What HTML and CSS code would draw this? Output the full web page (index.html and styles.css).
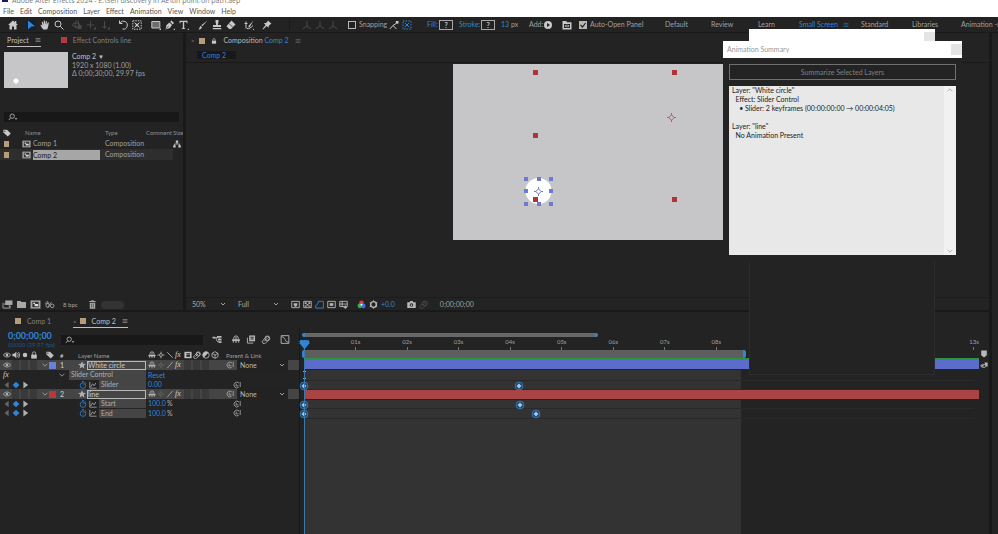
FILE: index.html
```html
<!DOCTYPE html>
<html lang="en">
<head>
    <meta charset="UTF-8">
    <title>Adobe After Effects 2024</title>
    <link rel="stylesheet" href="styles.css">
</head>
<body>
    <svg class="sprite" aria-hidden="true">
        <symbol id="i-home" viewBox="0 0 10 10"><path d="M5 .5 0 5h1.5v4.500h2.500V6.500h2v3h2.500V5H10L8.300 3.500V1H7v1.300z"/></symbol>
        <symbol id="i-arrow" viewBox="0 0 10 10"><path d="M2 .5 9 6.200 5.400 6.500 2 9.500z"/></symbol>
        <symbol id="i-hand" viewBox="0 0 10 10"><path d="M3.200 9.500C2 8 1 6.500.4 5c.6-.6 1.200-.2 2 .9L1.700 2c.6-.5 1-.2 1.200.2l.9 2.500L3.700.8c.5-.5 1.100-.4 1.200.2l.3 3.500.7-3.400c.5-.4 1-.1 1 .4l-.3 3.300L8 2.300c.6-.2.9.1.8.7C8.400 5 8.300 7.500 7 9.500z"/></symbol>
        <symbol id="i-zoom" viewBox="0 0 10 10"><circle cx="4" cy="4" r="3" class="ln"/><path class="ln" d="M6.200 6.200 9.500 9.500"/></symbol>
        <symbol id="i-orbit" viewBox="0 0 10 10"><ellipse class="ln" cx="4" cy="5" rx="3.500" ry="2"/><ellipse class="ln" cx="5" cy="4.500" rx="1.800" ry="3.800"/><path d="M6 5h3.500v4H6z"/></symbol>
        <symbol id="i-pan" viewBox="0 0 10 10"><path class="ln" d="M4.500 1v7.500M.8 5h7.500"/><path d="M7 9.500h3v-3z"/></symbol>
        <symbol id="i-dolly" viewBox="0 0 10 10"><path class="ln" d="M4.500 1v7M2.500 6l2 2.500 2-2.500"/><path d="M7 9.500h3v-3z"/></symbol>
        <symbol id="i-rot" viewBox="0 0 10 10"><path class="ln" d="M2 3A4 4 0 1 1 4.500 9M1.500.5v3h3"/></symbol>
        <symbol id="i-anchor" viewBox="0 0 10 10"><path class="ln" stroke-dasharray="1.500 1" d="M.8.800h8.400v8.400H.8z"/><path class="ln" d="m2.500 2.500 5 5m0-5-5 5"/><circle cx="5" cy="5" r="1.500"/></symbol>
        <symbol id="i-rect" viewBox="0 0 10 10"><path class="ln" d="M.8 1.500h8v6.500h-8z"/><path fill-opacity=".45" d="M1 2h7.500v6H1z"/><path d="M8 10h2V8z"/></symbol>
        <symbol id="i-pen" viewBox="0 0 10 10"><path d="M.5 9.500 1.500 5l3-2.500L7 5 5 8zM5.200 1.800 6.500.5l2.500 2.500-1.300 1.400zM8.300 10H10V8.300z"/><path stroke="#232323" stroke-width=".6" d="m.8 9.200 2.700-3"/></symbol>
        <symbol id="i-type" viewBox="0 0 10 10"><path d="M.5.800h8v2.400h-.8L7.300 2H5.200v6l1.100.4V9H2.700v-.6L3.800 8V2H1.700l-.4 1.200H.5zM8.300 10H10V8.300z"/></symbol>
        <symbol id="i-brush" viewBox="0 0 10 10"><path d="M9.500.5 4.300 6.200 3.300 5.200zM.5 9.500c1.200-.8.700-2.800 2.200-3.600L4 7.200C3.500 9 2 9.500.5 9.500z"/></symbol>
        <symbol id="i-stamp" viewBox="0 0 10 10"><path d="M3.500 1.800a1.600 1.600 0 1 1 3 0L5.800 5H9v2H1V5h3.200zM.8 8h8.400v1.300H.8z"/></symbol>
        <symbol id="i-eraser" viewBox="0 0 10 10"><path d="m5.500.500 4 4L5 9H3.200L.5 6.300z"/><path stroke="#232323" stroke-width=".7" d="m3 3.500 3.800 3.800"/></symbol>
        <symbol id="i-roto" viewBox="0 0 10 10"><path class="ln" d="M2 1.500v7M.5 3.500h3M3 8.500c2 .8 4-1 6-3"/><path d="M9.500.5 5.800 7l-1.400.6.100-1.600zM8.500 10H10V8.500z"/></symbol>
        <symbol id="i-pin" viewBox="0 0 10 10"><path d="m6 .5 3.500 3.300-1 .4-1.700 1.600-.2 2L4.700 6 1 9.500l-.5-.4L3.600 5 1.800 3.300l2.200-.2 1.500-1.700z"/></symbol>
        <symbol id="i-axis" viewBox="0 0 10 10"><path class="ln" d="M5 1v5L1 9m4-3 4 3"/></symbol>
        <symbol id="i-snap" viewBox="0 0 10 10"><path class="ln" d="M.8 9 4 5.500 7.500 9M4 5.500l3-2"/><path d="M6.800 1h2.700v2.700H6.800z"/></symbol>
        <symbol id="i-snap2" viewBox="0 0 10 10"><path class="ln" stroke-dasharray="1.500 1.200" d="M1 1h8v8H1z"/><path class="ln" d="m3 3 4 4m0-4L3 7"/></symbol>
        <symbol id="i-add" viewBox="0 0 10 10"><circle cx="5" cy="5" r="4"/><path fill="#232323" d="m4 3 3 2-3 2z"/></symbol>
        <symbol id="i-panel" viewBox="0 0 10 10"><path d="M.5 1h3.800l.6 1.200h4.600V9.500h-9z"/><path fill="#232323" d="M2 4h6v4H2z"/><path d="m4.500 4.600-2 1.400 2 1.400zm1 0 2 1.400-2 1.400z"/></symbol>
        <symbol id="i-menu" viewBox="0 0 10 10"><path d="M1 1.500h8v1H1zm0 3h8v1H1zm0 3h8v1H1z"/></symbol>
        <symbol id="i-search" viewBox="0 0 12 10"><circle class="ln" cx="5" cy="4" r="2.700"/><path class="ln" d="M3 6 .8 8.800"/><path d="M8 6.500h3.500L9.800 8.500z"/></symbol>
        <symbol id="i-tag" viewBox="0 0 10 10"><path d="M.5 1h4.500L9.700 5.700 6 9.500.5 4.500z"/><circle cx="2.300" cy="2.700" r=".8" fill="#232323"/></symbol>
        <symbol id="i-flow" viewBox="0 0 10 10"><path d="M3.500.5h3v3h-3zM.3 6.500h3v3h-3zM6.700 6.500h3v3h-3z"/><path class="ln" d="M5 3v2M1.800 7V5h6.400v2"/></symbol>
        <symbol id="i-comp" viewBox="0 0 12 10"><path d="M.5.5h11v9H.5z"/><path fill="#333" d="M2.500 2h7v6h-7z"/><path d="M3.500 3h2v1.500h-2zM5 4.500h4V7H5z" fill="#ddd"/></symbol>
        <symbol id="i-interp" viewBox="0 0 12 10"><path d="M3.500.5h8v5h-8z"/><path class="ln" d="M1 3v6h8V6.500M2 4.500h6V8"/></symbol>
        <symbol id="i-folder" viewBox="0 0 12 10"><path d="M1 1h4l1 1.300h5V9H1z"/></symbol>
        <symbol id="i-adj" viewBox="0 0 12 10"><path class="ln" d="M1 3.500h4L3 1M4 8.500l4-6"/><circle class="ln" cx="4" cy="6" r="2"/><circle class="ln" cx="9" cy="6.500" r="2"/></symbol>
        <symbol id="i-trash" viewBox="0 0 10 10"><path d="M1.500 1.200h2L4 .4h2l.5.8h2v1h-7zM2 3h6v6.700H2z"/><path stroke="#232323" stroke-width=".6" d="M4 4v4.500M6 4v4.500"/></symbol>
        <symbol id="i-lock" viewBox="0 0 10 10"><path d="M1.500 4.500h7v5h-7z"/><path class="ln" d="M3 5V3a2 2 0 0 1 4 0v2"/></symbol>
        <symbol id="i-view1" viewBox="0 0 10 10"><path class="ln" d="M.8 1.500h8.400v7H.8z"/><path d="M3 3.500h4v3H6v1H4v-1H3z"/></symbol>
        <symbol id="i-grid" viewBox="0 0 10 10"><path class="ln" d="M.8 1.500h8.400v7H.8z"/><path d="M2 2.500h2v2H2zm4 0h2v2H6zM4 4.500h2v1.500H4zM2 6h2v1.500H2zm4 0h2v1.500H6z"/></symbol>
        <symbol id="i-mask" viewBox="0 0 10 10"><path class="ln" d="M.8 9V6c1.700 0 2.700-2 3-4.500h5.500V9z"/></symbol>
        <symbol id="i-roi" viewBox="0 0 10 10"><path class="ln" d="M.8 1.500h8.400v7H.8z"/><path d="M3 3.500h4v3H3z"/></symbol>
        <symbol id="i-guides" viewBox="0 0 10 10"><path class="ln" d="M.8 1.500h8.400v5.800H.8zM3.500 1.500v6M.8 4.500h8.400M7 6v4M5 8.200h4"/></symbol>
        <symbol id="i-rgb" viewBox="0 0 10 10"><circle cx="5" cy="3.200" r="2.600" fill="#e03c3c"/><circle cx="3.200" cy="6.500" r="2.600" fill="#35b24c"/><circle cx="6.900" cy="6.600" r="2.600" fill="#3f6fe8"/><circle cx="5" cy="5.300" r="1.100" fill="#fff"/></symbol>
        <symbol id="i-shutter" viewBox="0 0 10 10"><circle cx="5" cy="5" r="3.200" fill="none" stroke="currentColor" stroke-width="1.600"/><path class="ln" d="M5 .3v2M5 7.700v2M.8 2.600l1.800 1M7.500 6.500l1.700 1M.8 7.500l1.700-1M7.500 3.500l1.700-1"/></symbol>
        <symbol id="i-camera" viewBox="0 0 10 10"><path d="M.3 2.500H3L3.700 1h2.600L7 2.500h2.700V9H.3z"/><circle cx="5" cy="5.600" r="2" fill="#232323"/><circle cx="5" cy="5.600" r="1"/></symbol>
        <symbol id="i-clip" viewBox="0 0 10 10"><path class="ln" d="M1.500 6 5 2.500a2 2 0 0 1 3 3L4.500 9a2 2 0 0 1-3-3zM3 7l3.500-3.500"/><circle class="ln" cx="6.500" cy="3.700" r="2.600"/></symbol>
        <symbol id="i-mini" viewBox="0 0 10 10"><path d="M0 2h3v2H0zM5 1h5v2H5zM6 4h4v2H6zM7 7h3v2H7z"/><path class="ln" d="M2 3h4M4 3c0 3 1 5 4 5"/></symbol>
        <symbol id="i-shy" viewBox="0 0 10 10"><path class="ln" d="M2.500 5V3.500a2.500 2.500 0 0 1 5 0V5M.5 5.500h9M5 2v7M2 5.500v3M8 5.500v3"/><path d="M1 5h8v1.800H1z"/></symbol>
        <symbol id="i-blend" viewBox="0 0 10 10"><path d="M3 .5h6.500V7H3z"/><path class="ln" d="M1 3v6h6.500"/><path fill="#232323" d="M4.500 2h3.500v1H4.500zM4.500 4h3.500v1H4.500z"/></symbol>
        <symbol id="i-graph" viewBox="0 0 10 10"><path class="ln" d="M.7.700h8.600v8.600H.7zM1.500 2C6 2 4 8 9 8"/></symbol>
        <symbol id="i-curve" viewBox="0 0 10 10"><path class="ln" d="M1 1v8h8.500M2 7.500 4.500 3.500 6.500 6 8.500 2.500"/></symbol>
        <symbol id="i-eye" viewBox="0 0 10 10"><path class="ln" d="M.5 5C2.500 1.700 7.500 1.700 9.500 5 7.500 8.300 2.500 8.300.5 5z"/><circle cx="5" cy="5" r="1.600"/></symbol>
        <symbol id="i-sound" viewBox="0 0 10 10"><path d="M.5 3.500h2L5.500.8v8.400L2.500 6.500h-2z"/><path class="ln" d="M6.700 2.500c1.400 1.500 1.400 3.500 0 5M8 1.200c2 2.200 2 5.400 0 7.600"/></symbol>
        <symbol id="i-dot" viewBox="0 0 10 10"><circle cx="5" cy="5" r="2.800"/></symbol>
        <symbol id="i-sun" viewBox="0 0 10 10"><circle class="ln" cx="5" cy="5" r="1.800"/><path class="ln" d="M5 .8v1.700M5 7.500v1.700M.8 5h1.700M7.500 5h1.700"/></symbol>
        <symbol id="i-back" viewBox="0 0 10 10"><path class="ln" d="m1.500 1.500 7 7"/></symbol>
        <symbol id="i-slash" viewBox="0 0 10 10"><path class="ln" d="m1.500 9 7-8"/></symbol>
        <symbol id="i-frame" viewBox="0 0 10 10"><path d="M.5 1h9v8h-9z"/><path fill="#232323" d="M3 2.500h4.500v1H3zM3 4.500h4.500v2.700H3z"/></symbol>
        <symbol id="i-half" viewBox="0 0 10 10"><circle class="ln" cx="5" cy="5" r="4"/><path d="M8 2.200A4 4 0 1 0 2.200 8z"/></symbol>
        <symbol id="i-cube" viewBox="0 0 10 10"><path class="ln" d="M5 .8 8.800 3v4L5 9.200 1.200 7V3zM1.200 3 5 5l3.800-2M5 5v4"/></symbol>
        <symbol id="i-star" viewBox="0 0 10 10"><path d="m5 .3 1.400 3.100 3.400.3-2.600 2.300.8 3.400-3-1.800-3 1.800.8-3.400L.2 3.700l3.400-.3z"/></symbol>
        <symbol id="i-watch" viewBox="0 0 10 10"><circle class="ln" cx="5" cy="5.700" r="3.500"/><path class="ln" d="M5 5.700 6.800 3.800M3.800.700h2.400M8 1.800l1 1"/></symbol>
        <symbol id="i-whip" viewBox="0 0 10 10"><path class="ln" d="M6.300 5.200a1.300 1.300 0 1 1-1.300-1.300M7.200 7.800a3.600 3.600 0 1 1 .2-5.300M9 1.200v6.300"/></symbol>
        <symbol id="i-chev" viewBox="0 0 10 10"><path class="ln" d="m2 3.500 3 3 3-3"/></symbol>
        <symbol id="i-left" viewBox="0 0 10 10"><path d="M7 1v8L2 5z"/></symbol>
        <symbol id="i-right" viewBox="0 0 10 10"><path d="M3 .5v9L9 5z"/></symbol>
        <symbol id="i-key" viewBox="0 0 10 10"><path d="m5 .8 4.200 4.200L5 9.200.8 5z"/></symbol>
        <symbol id="i-marker" viewBox="0 0 10 10"><path d="M1.500.5h7v6L5 9.500 1.500 6.500z"/></symbol>
        <symbol id="i-compbtn" viewBox="0 0 10 10"><path class="ln" d="M1 6h4M3 3.500 1 6l2 2.500"/><circle class="ln" cx="5" cy="6.200" r="2"/><path d="M5.500 2H9.500v5h-2z"/></symbol>
        <symbol id="i-kf" viewBox="0 0 12 12"><circle cx="6" cy="6" r="4.700" fill="#1d4468" stroke="#3a7fbe"/><path fill="#a4c8e8" d="m6 3 3 3-3 3-3-3z"/></symbol>
        <symbol id="i-target" viewBox="0 0 10 10"><path class="ln" d="M5 2 8 5 5 8 2 5zM5 0v2M5 8v2M0 5h2M8 5h2"/></symbol>
    </svg>

    <header class="titlebar"><span class="app-icon"></span>Adobe After Effects 2024 - E:\Sen discovery in AE\tin point on path.aep</header>
    <nav class="menubar">
        <a href="#">File</a><a href="#">Edit</a><a href="#">Composition</a><a href="#">Layer</a><a href="#">Effect</a><a href="#">Animation</a><a href="#">View</a><a href="#">Window</a><a href="#">Help</a>
    </nav>

    <div class="toolbar">
        <div class="tools">
            <div class="group"><button aria-label="Home"><svg><use href="#i-home"/></svg></button></div>
            <div class="group">
                <button class="active" aria-label="Selection"><svg><use href="#i-arrow"/></svg></button>
                <button aria-label="Hand"><svg><use href="#i-hand"/></svg></button>
                <button aria-label="Zoom"><svg><use href="#i-zoom"/></svg></button>
            </div>
            <div class="group dim">
                <button aria-label="Orbit"><svg><use href="#i-orbit"/></svg></button>
                <button aria-label="Pan"><svg><use href="#i-pan"/></svg></button>
                <button aria-label="Dolly"><svg><use href="#i-dolly"/></svg></button>
            </div>
            <div class="group">
                <button aria-label="Rotate"><svg><use href="#i-rot"/></svg></button>
                <button aria-label="Anchor point"><svg><use href="#i-anchor"/></svg></button>
            </div>
            <div class="group shapes">
                <button aria-label="Rectangle"><svg><use href="#i-rect"/></svg></button>
                <button aria-label="Pen"><svg><use href="#i-pen"/></svg></button>
                <button aria-label="Type"><svg><use href="#i-type"/></svg></button>
            </div>
            <div class="group">
                <button aria-label="Brush"><svg><use href="#i-brush"/></svg></button>
                <button aria-label="Clone stamp"><svg><use href="#i-stamp"/></svg></button>
                <button aria-label="Eraser"><svg><use href="#i-eraser"/></svg></button>
            </div>
            <div class="group"><button aria-label="Roto brush"><svg><use href="#i-roto"/></svg></button></div>
            <div class="group"><button aria-label="Puppet pin"><svg><use href="#i-pin"/></svg></button></div>
            <div class="group dim axes">
                <button aria-label="Local axis"><svg><use href="#i-axis"/></svg></button>
                <button aria-label="World axis"><svg><use href="#i-axis"/></svg></button>
                <button aria-label="View axis"><svg><use href="#i-axis"/></svg></button>
            </div>
        </div>
        <div class="options">
            <label><input type="checkbox">Snapping</label>
            <button aria-label="Snap edges"><svg><use href="#i-snap"/></svg></button>
            <button class="active" aria-label="Snap features"><svg><use href="#i-snap2"/></svg></button>
            <span class="blue">Fill:</span><button class="swatch">?</button>
            <span class="blue">Stroke:</span><button class="swatch">?</button>
            <span><b>13</b> px</span>
            <span>Add:</span><button aria-label="Add"><svg><use href="#i-add"/></svg></button>
            <button aria-label="Panels"><svg><use href="#i-panel"/></svg></button>
            <label><input type="checkbox" checked>Auto-Open Panel</label>
        </div>
        <nav class="workspaces">
            <a href="#">Default</a><a href="#">Review</a><a href="#">Learn</a><a class="current" href="#">Small Screen <svg><use href="#i-menu"/></svg></a><a href="#">Standard</a><a href="#">Libraries</a><a href="#">Animation -n</a>
        </nav>
    </div>

    <div class="frame">
        <main class="panels">
            <div class="upper">
                <section class="project">
                    <div class="tabs">
                        <span class="tab current">Project <svg><use href="#i-menu"/></svg></span>
                        <span class="tab"><i class="chip red"></i>Effect Controls line</span>
                    </div>
                    <div class="preview">
                        <div class="thumb"></div>
                        <div><strong>Comp 2 <span class="tri">▼</span></strong><br>1920 x 1080 (1.00)<br>Δ 0;00;30;00, 29.97 fps</div>
                    </div>
                    <label class="search"><svg><use href="#i-search"/></svg><input type="text" aria-label="Search project"></label>
                    <table class="items">
                        <thead><tr><th class="c-tag"><svg><use href="#i-tag"/></svg></th><th class="c-name">Name</th><th class="c-type">Type</th><th class="c-comment">Comment</th><th>Size</th></tr></thead>
                        <tbody>
                            <tr><td><i class="chip tan"></i></td><td><div class="item"><svg><use href="#i-comp"/></svg><span>Comp 1</span></div></td><td>Composition</td><td></td><td class="light"><svg><use href="#i-flow"/></svg></td></tr>
                            <tr class="selected"><td><i class="chip tan"></i></td><td><div class="item"><svg><use href="#i-comp"/></svg><span>Comp 2</span></div></td><td>Composition</td><td></td><td class="off"></td></tr>
                        </tbody>
                    </table>
                    <div class="project-foot">
                        <button aria-label="Interpret footage"><svg><use href="#i-interp"/></svg></button>
                        <button aria-label="New folder"><svg><use href="#i-folder"/></svg></button>
                        <button aria-label="New composition"><svg><use href="#i-comp"/></svg></button>
                        <button aria-label="Project settings"><svg><use href="#i-adj"/></svg></button>
                        <span class="bpc">8 bpc</span>
                        <button aria-label="Delete"><svg><use href="#i-trash"/></svg></button>
                        <i class="pill"></i>
                    </div>
                </section>

                <section class="viewer">
                    <div class="tabs">
                        <span class="x">×</span><i class="chip tan"></i><svg class="light"><use href="#i-lock"/></svg>
                        <span class="viewer-title">Composition <span class="blue">Comp 2</span></span><svg><use href="#i-menu"/></svg>
                    </div>
                    <div class="crumbs"><a href="#">Comp 2</a></div>
                    <div class="stage">
                        <svg class="canvas" viewBox="0 0 270 176">
                            <rect width="270" height="176" fill="#c6c6c8"/>
                            <circle cx="85.500" cy="127" r="13" fill="#fff"/>
                            <g fill="#b0323a">
                                <rect x="80" y="6" width="5" height="5"/><rect x="219" y="6" width="5" height="5"/>
                                <rect x="80" y="69" width="5" height="5"/><rect x="80" y="133" width="5" height="5"/>
                                <rect x="219" y="133" width="5" height="5"/>
                            </g>
                            <g fill="#6b7bd0">
                                <rect x="71" y="113" width="4" height="4"/><rect x="84" y="113" width="4" height="4"/><rect x="96" y="113" width="4" height="4"/>
                                <rect x="71" y="125" width="4" height="4"/><rect x="96" y="125" width="4" height="4"/>
                                <rect x="71" y="138" width="4" height="4"/><rect x="84" y="138" width="4" height="4"/><rect x="96" y="138" width="4" height="4"/>
                            </g>
                            <use href="#i-target" x="81" y="123" width="9" height="9" color="#5a6bb8"/>
                            <use href="#i-target" x="214" y="49" width="9" height="9" color="#c0454c"/>
                        </svg>
                    </div>
                    <div class="viewer-foot">
                        <select class="mag" aria-label="Magnification"><option>50%</option></select>
                        <select class="res" aria-label="Resolution"><option>Full</option></select>
                        <div class="view-icons">
                            <button aria-label="Fast previews"><svg><use href="#i-view1"/></svg></button>
                            <button aria-label="Transparency grid"><svg><use href="#i-grid"/></svg></button>
                            <button class="active" aria-label="Mask visibility"><svg><use href="#i-mask"/></svg></button>
                            <button aria-label="Region of interest"><svg><use href="#i-roi"/></svg></button>
                            <button aria-label="Guides"><svg><use href="#i-guides"/></svg></button>
                        </div>
                        <div class="view-icons">
                            <button aria-label="Channels"><svg><use href="#i-rgb"/></svg></button>
                            <button aria-label="Reset exposure"><svg><use href="#i-shutter"/></svg></button>
                            <span class="blue">+0.0</span>
                        </div>
                        <div class="view-icons shots">
                            <button aria-label="Snapshot"><svg><use href="#i-camera"/></svg></button>
                            <button class="dim" aria-label="Show snapshot"><svg><use href="#i-clip"/></svg></button>
                        </div>
                        <span class="time">0;00;00;00</span>
                    </div>
                </section>
            </div>

            <section class="timeline">
                <div class="tabs">
                    <span class="tab"><i class="chip tan"></i>Comp 1</span>
                    <span class="tab current"><span class="x">×</span><i class="chip tan"></i>Comp 2 <svg><use href="#i-menu"/></svg></span>
                </div>
                <div class="tl-body">
                    <div class="layers">
                        <div class="tl-head">
                            <div class="timecode"><strong>0;00;00;00</strong><small>00000 (29.97 fps)</small></div>
                            <label class="search"><svg><use href="#i-search"/></svg><input type="text" aria-label="Search layers"></label>
                            <div class="tl-switches">
                                <button aria-label="Mini flowchart"><svg><use href="#i-mini"/></svg></button>
                                <button aria-label="Shy"><svg><use href="#i-shy"/></svg></button>
                                <button aria-label="Frame blending"><svg><use href="#i-blend"/></svg></button>
                                <button aria-label="Motion blur"><svg><use href="#i-clip"/></svg></button>
                                <button aria-label="Graph editor"><svg><use href="#i-graph"/></svg></button>
                            </div>
                        </div>
                        <div class="row head">
                            <div class="av"><svg><use href="#i-eye"/></svg><svg><use href="#i-sound"/></svg><svg><use href="#i-dot"/></svg><svg><use href="#i-lock"/></svg></div>
                            <div class="lab"><svg><use href="#i-tag"/></svg></div>
                            <div class="num">#</div>
                            <div class="name">Layer Name</div>
                            <div class="sw"><svg><use href="#i-shy"/></svg><svg><use href="#i-sun"/></svg><svg><use href="#i-back"/></svg><em>fx</em><svg><use href="#i-frame"/></svg><svg><use href="#i-clip"/></svg><svg><use href="#i-half"/></svg><svg><use href="#i-cube"/></svg></div>
                            <div class="parent">Parent &amp; Link</div>
                        </div>
                        <div class="row layer">
                            <div class="av"><svg><use href="#i-eye"/></svg><i class="cell"></i><i class="cell"></i><i class="cell"></i></div>
                            <div class="lab"><svg><use href="#i-chev"/></svg><i class="chip indigo"></i></div>
                            <div class="num">1</div>
                            <div class="name"><svg><use href="#i-star"/></svg><span class="field">White circle</span></div>
                            <div class="sw"><svg><use href="#i-shy"/></svg><svg class="faint"><use href="#i-sun"/></svg><svg><use href="#i-slash"/></svg><em>fx</em><i class="cell"></i><i class="cell"></i><i class="cell"></i></div>
                            <div class="parent"><svg><use href="#i-whip"/></svg><select aria-label="Parent of White circle"><option>None</option></select></div>
                        </div>
                        <div class="row effect">
                            <div class="av"><em>fx</em></div>
                            <div class="lab"></div>
                            <div class="group-name"><svg><use href="#i-chev"/></svg><span>Slider Control</span></div>
                            <div class="sw blue">Reset</div>
                            <div class="parent"></div>
                        </div>
                        <div class="row prop">
                            <div class="av"><svg class="faint"><use href="#i-left"/></svg><svg class="blue"><use href="#i-key"/></svg><svg><use href="#i-right"/></svg></div>
                            <div class="lab"></div><div class="num"></div>
                            <div class="name"><svg class="blue"><use href="#i-watch"/></svg><svg><use href="#i-curve"/></svg><span class="pname">Slider</span></div>
                            <div class="sw blue">0.00</div>
                            <div class="parent"><svg><use href="#i-whip"/></svg></div>
                        </div>
                        <div class="row layer">
                            <div class="av"><svg><use href="#i-eye"/></svg><i class="cell"></i><i class="cell"></i><i class="cell"></i></div>
                            <div class="lab"><svg><use href="#i-chev"/></svg><i class="chip red"></i></div>
                            <div class="num">2</div>
                            <div class="name"><svg><use href="#i-star"/></svg><span class="field">line</span></div>
                            <div class="sw"><svg><use href="#i-shy"/></svg><svg class="faint"><use href="#i-sun"/></svg><svg><use href="#i-slash"/></svg><em>fx</em><i class="cell"></i><i class="cell"></i><i class="cell"></i></div>
                            <div class="parent"><svg><use href="#i-whip"/></svg><select aria-label="Parent of line"><option>None</option></select></div>
                        </div>
                        <div class="row prop">
                            <div class="av"><svg class="faint"><use href="#i-left"/></svg><svg class="blue"><use href="#i-key"/></svg><svg><use href="#i-right"/></svg></div>
                            <div class="lab"></div><div class="num"></div>
                            <div class="name"><svg class="blue"><use href="#i-watch"/></svg><svg><use href="#i-curve"/></svg><span class="pname">Start</span></div>
                            <div class="sw"><span class="blue">100.0</span>%</div>
                            <div class="parent"><svg><use href="#i-whip"/></svg></div>
                        </div>
                        <div class="row prop last">
                            <div class="av"><svg class="faint"><use href="#i-left"/></svg><svg class="blue"><use href="#i-key"/></svg><svg><use href="#i-right"/></svg></div>
                            <div class="lab"></div><div class="num"></div>
                            <div class="name"><svg class="blue"><use href="#i-watch"/></svg><svg><use href="#i-curve"/></svg><span class="pname">End</span></div>
                            <div class="sw"><span class="blue">100.0</span>%</div>
                            <div class="parent"><svg><use href="#i-whip"/></svg></div>
                        </div>
                    </div>

                    <div class="tracks">
                        <div class="navigator"><i style="width: 44%"></i></div>
                        <div class="ruler">
                            <span>:00s</span><span>01s</span><span>02s</span><span>03s</span><span>04s</span><span>05s</span><span>06s</span><span>07s</span><span>08s</span><span>09s</span><span>10s</span><span>11s</span><span>12s</span><span>13s</span>
                        </div>
                        <div class="workarea"><i style="width: 64.7%"></i><svg><use href="#i-marker"/></svg></div>
                        <div class="lanes">
                            <div class="shade" style="width: 64.7%"></div>
                            <div class="lane layer"><i class="bar indigo"></i><svg class="comp-button"><use href="#i-compbtn"/></svg></div>
                            <div class="lane effect"><i class="ibeam"></i></div>
                            <div class="lane prop"><svg class="kf" style="left: 0%"><use href="#i-kf"/></svg><svg class="kf" style="left: 32.1%"><use href="#i-kf"/></svg></div>
                            <div class="lane layer"><i class="bar red"></i></div>
                            <div class="lane prop"><svg class="kf" style="left: 0%"><use href="#i-kf"/></svg><svg class="kf" style="left: 32.3%"><use href="#i-kf"/></svg></div>
                            <div class="lane prop last"><svg class="kf" style="left: 0%"><use href="#i-kf"/></svg><svg class="kf" style="left: 34.6%"><use href="#i-kf"/></svg></div>
                        </div>
                        <div class="playhead"></div>
                    </div>
                </div>
            </section>
        </main>
        <aside class="dock"></aside>
    </div>

    <div class="window back">
        <div class="window-title"><span></span><button class="close" aria-label="Close"></button></div>
    </div>
    <div class="window summary">
        <div class="window-title"><span>Animation Summary</span><button class="close" aria-label="Close"></button></div>
        <div class="window-body">
            <button class="summarize">Summarize Selected Layers</button>
            <div class="output">
                <textarea readonly aria-label="Summary">Layer: "White circle"
  Effect: Slider Control
    • Slider: 2 keyframes (00:00:00:00 → 00:00:04:05)

Layer: "line"
  No Animation Present</textarea>
                <div class="scroll"><svg class="up"><use href="#i-chev"/></svg><svg><use href="#i-chev"/></svg></div>
            </div>
        </div>
    </div>
</body>
</html>
```
FILE: styles.css
```css
* {
    box-sizing: border-box;
}

body {
    margin: 0;
    height: 100vh;
    overflow: hidden;
    display: flex;
    flex-direction: column;
    background: #232323;
    color: #a0a0a0;
    font: 7px/9px Lato, "Open Sans", sans-serif;
    white-space: nowrap;
}

.sprite {
    display: none;
}

svg {
    width: 8px;
    height: 8px;
    flex: none;
    fill: currentColor;
}

.ln {
    fill: none;
    stroke: currentColor;
    stroke-width: 1;
}

a {
    color: inherit;
    text-decoration: none;
}

button,
input,
select,
textarea {
    font: inherit;
    color: inherit;
    margin: 0;
    padding: 0;
    border: 0;
    border-radius: 0;
    background: none;
}

button {
    display: flex;
    align-items: center;
    justify-content: center;
    flex: none;
}

.blue,
.active {
    color: #2f86d8;
}

.dim {
    color: #4a4a4a;
}

.faint {
    color: #666;
}

.light {
    color: #c8c8c8;
}

.chip {
    display: inline-block;
    width: 6px;
    height: 6px;
    flex: none;
}

.chip.tan { background: #b59d7c; }
.chip.red { background: #b8393d; }
.chip.indigo { background: #6a7fd8; }

/* title and menu */

.titlebar {
    height: 6px;
    flex: none;
    display: flex;
    align-items: flex-end;
    gap: 4px;
    overflow: hidden;
    padding-left: 2px;
    background: #fff;
    color: #777;
    font-family: "Open Sans", sans-serif;
    line-height: 10px;
}

.app-icon {
    width: 6px;
    height: 8px;
    margin-bottom: 4px;
    background: #1a1a5a;
}

.menubar {
    flex: none;
    height: 11px;
    display: flex;
    gap: 6px;
    padding-left: 3px;
    background: #fff;
    color: #555;
    line-height: 11px;
}

/* toolbar */

.toolbar {
    flex: none;
    height: 16px;
    display: flex;
    align-items: center;
    border-bottom: 1px solid #191919;
    overflow: hidden;
}

.tools {
    display: flex;
    flex: none;
    gap: 8px;
    width: 348px;
    padding-left: 8px;
    color: #c8c8c8;
}

.group {
    display: flex;
    gap: 4px;
}

.shapes {
    margin: 0 1px;
}

.tools .dim {
    color: #4a4a4a;
}

.toolbar button svg {
    width: 10px;
    height: 10px;
}

.tools .active {
    background: #15202b;
    color: #2f86d8;
}

.axes {
    gap: 3px;
    margin-left: 9px;
    padding-left: 12px;
    border-left: 1px solid #191919;
}

.options {
    flex: none;
    display: grid;
    grid-template-columns: 41px 13px 25px 12px 20px 22px 20px 28px 14px 19px 17px 1fr;
    align-items: center;
    width: 317px;
}

.options button {
    justify-self: start;
}

.options button:not(.active) {
    color: #c8c8c8;
}

.options label {
    display: flex;
    align-items: center;
    gap: 3px;
}

.options b {
    font-weight: normal;
    color: #2f86d8;
}

.options .swatch {
    width: 14px;
    height: 10px;
    border: 1px solid #a8a8a8;
    font-weight: bold;
    line-height: 8px;
}

input[type="checkbox"] {
    appearance: none;
    width: 8px;
    height: 8px;
    border: 1px solid #b8b8b8;
}

input[type="checkbox"]:checked {
    background: #b8b8b8 url("data:image/svg+xml,%3Csvg xmlns='http://www.w3.org/2000/svg' viewBox='0 0 7 7'%3E%3Cpath d='M1 3.500 3 5.500 6 1.500' fill='none' stroke='%23222' stroke-width='1.200'/%3E%3C/svg%3E") center / 7px;
}

.workspaces {
    display: grid;
    grid-template-columns: 46px 47px 41px 62px 51px 49px 1fr;
}

.workspaces .current {
    display: flex;
    align-items: center;
    justify-content: space-between;
    margin-right: 12px;
    color: #2f86d8;
}

.workspaces svg {
    width: 6px;
    height: 6px;
}

/* panels */

.frame {
    flex: 1;
    min-height: 0;
    display: flex;
}

.dock {
    width: 9px;
    flex: none;
    border-left: 3px solid #191919;
}

.panels {
    flex: 1;
    min-width: 0;
    display: flex;
    flex-direction: column;
}

.upper {
    flex: 5 1 0;
    min-height: 0;
    display: flex;
    border-bottom: 2px solid #191919;
}

.tabs {
    flex: none;
    display: flex;
    align-items: flex-end;
    height: 14px;
    color: #808080;
}

.tabs svg {
    width: 6px;
    height: 6px;
}

.tab {
    display: flex;
    align-items: center;
    gap: 6px;
    height: 13px;
    border-bottom: 1px solid transparent;
}

.tab.current {
    color: #c0c0c0;
    border-color: #c0c0c0;
}

.x {
    color: #808080;
    font-size: 6px;
}

.search {
    display: flex;
    align-items: center;
    height: 10px;
    background: #181818;
}

.search svg {
    width: 10px;
    margin-left: 4px;
    color: #c0c0c0;
}

.search input {
    flex: 1;
    min-width: 0;
    outline: 0;
}

.project {
    width: 186px;
    flex: none;
    display: flex;
    flex-direction: column;
    overflow: hidden;
    border-right: 3px solid #191919;
}

.project .tabs {
    gap: 20px;
    padding-left: 7px;
}

.preview {
    display: flex;
    gap: 4px;
    padding: 5px 4px 0;
    line-height: 8px;
}

.preview strong {
    font-weight: normal;
    color: #c0c0c0;
}

.tri {
    font-size: 6px;
}

.thumb {
    width: 64px;
    height: 36px;
    background: radial-gradient(circle at 12px 29px, #fff 2px, transparent 3px) #c6c6c8;
}

.project .search {
    flex: none;
    margin: 24px 4px 5px;
}

.items {
    table-layout: fixed;
    width: 183px;
    flex: none;
    border-collapse: collapse;
}

.items th,
.items td {
    height: 11px;
    padding: 0;
    text-align: left;
    font-weight: normal;
}

.items th {
    font-size: 6px;
    line-height: 8px;
    color: #909090;
}

.items svg,
.items .chip {
    display: block;
}

.items .chip {
    width: 5px;
    margin-left: 4px;
}

.c-tag svg {
    margin-left: 3px;
    color: #c8c8c8;
}

.c-tag { width: 25px; }
.c-name { width: 80px; }
.c-type { width: 41px; }
.c-comment { width: 27px; }

.item {
    display: flex;
    align-items: center;
    width: 78px;
    margin-left: -3px;
    color: #a0a0a0;
}

.item svg {
    width: 9px;
    margin-right: 2px;
}

.item span {
    flex: 1;
}

.items .selected td {
    background: #2e2e2e;
}

.items .selected .off {
    background: none;
}

.selected .item span {
    height: 10px;
    line-height: 10px;
    background: #a6a6a6;
    color: #181818;
}

.project-foot {
    margin-top: auto;
    height: 11px;
    display: flex;
    align-items: center;
    gap: 3px;
    padding-left: 2px;
    color: #a8a8a8;
}

.project-foot svg {
    width: 11px;
    height: 9px;
}

.bpc {
    margin: 0 6px 0 5px;
    font-size: 6px;
}

.pill {
    width: 23px;
    height: 8px;
    border-radius: 4px;
    background: #333;
}

.viewer {
    flex: 1;
    min-width: 0;
    display: flex;
    flex-direction: column;
}

.viewer .tabs {
    align-items: center;
    gap: 6px;
    height: 15px;
    padding-left: 5px;
}

.viewer .tabs .x {
    margin-right: -1px;
}

.viewer-title {
    color: #b8b8b8;
}

.crumbs {
    flex: none;
    height: 15px;
    padding: 3px 0 0 11px;
    border-bottom: 1px solid #191919;
    line-height: 8px;
}

.crumbs a {
    display: inline-block;
    width: 39px;
    padding-left: 5px;
    background: #181818;
    color: #2f86d8;
}

.stage {
    flex: 1;
    min-height: 0;
    display: flex;
    justify-content: center;
    align-items: flex-start;
    padding-top: 1px;
}

.canvas {
    width: 270px;
    height: 176px;
}

.viewer-foot {
    flex: none;
    height: 13px;
    display: flex;
    align-items: center;
    gap: 9px;
    padding-left: 6px;
    border-top: 1px solid #1c1c1c;
}

select {
    appearance: none;
    background: url("data:image/svg+xml,%3Csvg xmlns='http://www.w3.org/2000/svg' viewBox='0 0 6 6'%3E%3Cpath d='m1 2 2 2 2-2' fill='none' stroke='%23a0a0a0'/%3E%3C/svg%3E") no-repeat right 3px center / 6px;
}

.viewer-foot select {
    color: #a8a8a8;
}

.mag {
    width: 37px;
}

.res {
    width: 44px;
}

.view-icons {
    display: flex;
    align-items: center;
    gap: 3px;
    color: #b8b8b8;
}

.view-icons .blue {
    color: #2f86d8;
}

.view-icons svg {
    width: 9px;
    height: 9px;
}

.shots {
    margin: 0 3px;
}

/* timeline */

.timeline {
    flex: 4 1 0;
    min-height: 0;
    display: flex;
    flex-direction: column;
}

.timeline .tabs {
    gap: 22px;
    height: 16px;
    padding-left: 15px;
}

.timeline .x {
    margin-right: -3px;
}

.tl-body {
    flex: 1;
    min-height: 0;
    display: flex;
}

.layers {
    width: 300px;
    flex: none;
    display: flex;
    flex-direction: column;
}

.tl-head {
    height: 22px;
    display: flex;
    align-items: center;
    padding: 1px 0 0 8px;
}

.timecode {
    width: 53px;
    color: #2f86d8;
}

.timecode strong,
.timecode small {
    display: block;
}

.timecode strong {
    font-size: 9px;
    line-height: 10px;
}

.timecode small {
    font-size: 6px;
    line-height: 7px;
    color: #1f5588;
}

.tl-head .search {
    width: 142px;
}

.tl-switches {
    display: flex;
    gap: 5px;
    margin-left: 9px;
    color: #b8b8b8;
}

.tl-switches svg {
    width: 10px;
    height: 9px;
}

.tl-switches button:first-child {
    margin-right: 4px;
}

.tl-switches button:last-child {
    margin-left: 4px;
}

.row {
    height: 10px;
    display: grid;
    grid-template-columns: 40px 18px 20px 70px 78px 1fr;
    align-items: center;
    color: #b0b0b0;
}

.row > div {
    display: flex;
    align-items: center;
}

.row.head {
    font-size: 6px;
    color: #a0a0a0;
}

.row.head svg {
    color: #c0c0c0;
}

.row.layer {
    background: #454545;
}

.row.prop,
.lane.prop {
    height: 9px;
}

.row.last,
.lane.last {
    height: 10px;
}

.row .av {
    padding-left: 3px;
    gap: 1px;
}

.row .lab {
    padding-left: 1px;
}

.lab .chip {
    width: 7px;
    height: 7px;
}

.row.head .lab {
    padding-left: 6px;
}

.row .num {
    padding-left: 2px;
    color: #d0d0d0;
}

.row .sw {
    gap: 1px;
}

.row em {
    width: 8px;
    font: italic 8px/8px "Liberation Serif", serif;
    color: #d0d0d0;
}

.cell {
    width: 7px;
    height: 10px;
    margin-right: 1px;
    background: #393939;
}

.field {
    flex: 1;
    height: 9px;
    margin: 0 2px 0 1px;
    border: 1px solid #b8b8b8;
    line-height: 7px;
    color: #c8c8c8;
}

.row.prop .name {
    padding-left: 1px;
    gap: 2px;
}

.pname {
    flex: 1;
    margin-right: 2px;
    padding-left: 2px;
    line-height: 9px;
    background: #454545;
}

.row .group-name {
    grid-column: span 2;
}

.group-name span {
    flex: 1;
    height: 10px;
    margin: 0 2px 0 3px;
    padding-left: 2px;
    background: #454545;
}

.row .parent {
    gap: 3px;
}

.row.prop .parent {
    padding-left: 7px;
}

.parent select {
    width: 51px;
    height: 10px;
    padding-left: 3px;
    background-color: #222;
    color: #b8b8b8;
}

.tracks {
    flex: 1;
    min-width: 0;
    position: relative;
    display: flex;
    flex-direction: column;
    padding: 0 15px 0 4px;
    border-left: 1px solid #191919;
    margin-left: -1px;
}

.navigator {
    height: 9px;
    padding-top: 5px;
    margin-left: -2px;
}

.navigator i {
    display: block;
    height: 4px;
    border: solid #2f86d8;
    border-width: 0 3px;
    border-radius: 2px;
    background: #686868;
}

.ruler {
    height: 13px;
    display: grid;
    grid-template-columns: repeat(13, 1fr) 0;
    font-size: 6px;
    line-height: 10px;
}

.ruler span {
    width: 20px;
    margin-left: -10px;
    height: 13px;
    text-align: center;
    background: linear-gradient(#777, #777) center bottom / 1px 3px no-repeat;
}

.workarea {
    height: 8px;
    display: flex;
    margin: 0 -14px 0 -2px;
}

.workarea i {
    border: solid #2f86d8;
    border-width: 0 3px;
    border-radius: 2px;
    background: #5e5e5e;
}

.workarea svg {
    margin-left: auto;
    color: #b8b8b8;
}

.lanes {
    flex: 1;
    position: relative;
    border-top: 2px solid #2c9440;
    margin-right: -5px;
    padding-right: 5px;
}

.shade {
    position: absolute;
    inset: 0 auto 0 0;
    background: #333;
}

.lane {
    position: relative;
    height: 10px;
    border-bottom: 1px solid #292929;
}

.lane.layer {
    border: 0;
}

.bar {
    display: block;
    height: 10px;
    margin-right: -5px;
    border-bottom: 1px solid #222;
}

.bar.indigo { background: #5c6ccb; }
.bar.red { background: #a84444; }

.comp-button {
    position: absolute;
    top: 1px;
    right: -14px;
    color: #b8b8b8;
}

.ibeam {
    display: block;
    width: 3px;
    height: 8px;
    margin: 1px 0 0 -1px;
    border: solid #a8a8a8;
    border-width: 1px 0;
    background: linear-gradient(#a8a8a8, #a8a8a8) center / 1px 100% no-repeat;
}

.kf {
    position: absolute;
    width: 10px;
    height: 10px;
    top: 0;
    margin-left: -5px;
}

.playhead {
    position: absolute;
    left: 4px;
    top: 12px;
    bottom: 0;
    width: 1px;
    background: #3a78ae;
}

.playhead::before {
    content: "";
    position: absolute;
    left: -4px;
    width: 9px;
    height: 9px;
    background: #2f86d8;
    clip-path: polygon(0 0, 100% 0, 100% 40%, 50% 100%, 0 40%);
}

/* floating windows */

.window {
    position: absolute;
    display: flex;
    flex-direction: column;
    background: #232323;
}

.window.back {
    left: 749px;
    top: 29px;
    width: 186px;
    height: 346px;
    border: solid #2c2c2c;
    border-width: 0 1px 1px;
}

.window.summary {
    left: 723px;
    top: 41px;
    width: 239px;
}

.window-title {
    display: flex;
    justify-content: space-between;
    align-items: center;
    height: 17px;
    background: #fff;
    color: #999;
    padding-left: 4px;
}

.close {
    width: 11px;
    height: 11px;
    background: #e4e4e4;
}

.back .window-title {
    margin: 0 -1px;
}

.window-body {
    display: flex;
    flex-direction: column;
    gap: 6px;
    padding: 6px 6px 7px;
}

.summarize {
    height: 16px;
    border: 1px solid #707070;
    color: #808080;
}

.output {
    height: 169px;
    display: flex;
    background: #e8e8e8;
    color: #222;
}

.output textarea {
    flex: 1;
    resize: none;
    outline: 0;
    overflow: hidden;
    padding: 0 3px;
}

.scroll {
    width: 12px;
    display: flex;
    flex-direction: column;
    justify-content: space-between;
    align-items: center;
    background: #f1f1f1;
    color: #a0a0a0;
}

.scroll .up {
    transform: rotate(180deg);
}
```
